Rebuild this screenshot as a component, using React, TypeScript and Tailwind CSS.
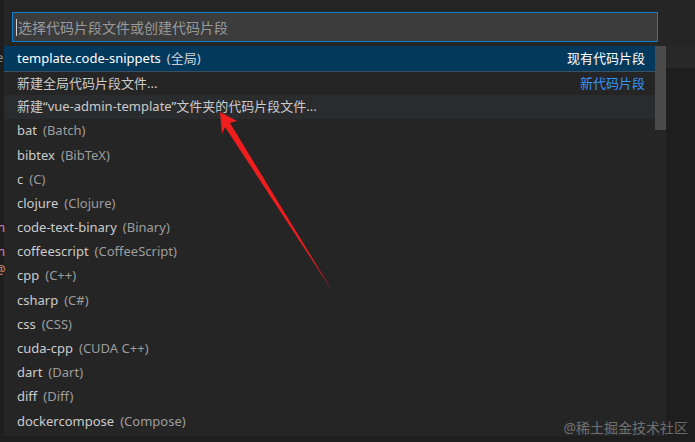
import React from 'react';

type Lang = { id: string; name: string };

const langs: Lang[] = [
  { id: 'bat', name: 'Batch' },
  { id: 'bibtex', name: 'BibTeX' },
  { id: 'c', name: 'C' },
  { id: 'clojure', name: 'Clojure' },
  { id: 'code-text-binary', name: 'Binary' },
  { id: 'coffeescript', name: 'CoffeeScript' },
  { id: 'cpp', name: 'C++' },
  { id: 'csharp', name: 'C#' },
  { id: 'css', name: 'CSS' },
  { id: 'cuda-cpp', name: 'CUDA C++' },
  { id: 'dart', name: 'Dart' },
  { id: 'diff', name: 'Diff' },
  { id: 'dockercompose', name: 'Compose' },
];

const font = { fontFamily: '"Noto Sans", "Noto Sans CJK SC", sans-serif' };

const Arrow = () => (
  <svg className="absolute left-0 top-0 pointer-events-none" width="695" height="442">
    <polygon
      points="220,112 237,121 230,123 333,292 225,127 222,134"
      fill="#f01d1d"
    />
  </svg>
);

export default function App() {
  return (
    <div
      className="relative w-[695px] h-[442px] overflow-hidden bg-[#1e1e1e] text-[13px] text-[#cccccc]"
      style={font}
    >
      <div className="flex h-full">
        {/* editor gutter peeking out */}
        <div className="relative w-[4px] shrink-0">
          <span className="absolute left-[-4px] top-[48px] text-[#8c8c8c]">e</span>
          <span className="absolute left-[-7px] top-[218px] text-[#c586c0]">m</span>
          <span className="absolute left-[-7px] top-[242px] text-[#c586c0]">m</span>
          <span className="absolute left-[-6px] top-[260px] text-[#ce9178]">@</span>
        </div>

        {/* quick pick widget */}
        <div className="w-[662px] h-[436px] shrink-0 bg-[#252526] flex flex-col">
          <div className="px-[8px] pt-[12px]">
            <div className="h-[30px] border border-[#0e7fd0] bg-[#3c3c3c] flex items-center pl-[3px]">
              <span className="w-px h-[17px] bg-[#d4d4d4]" />
              <span className="ml-px text-[14px] text-[#9a9a9a]">选择代码片段文件或创建代码片段</span>
            </div>
          </div>

          <div className="flex mt-[4px] flex-1">
            <div className="flex-1 flex flex-col">
              <div className="h-[25px] bg-[#04395e] flex items-center pl-[13px] pr-[10px] text-white">
                <span>template.code-snippets</span>
                <span className="ml-[6px] text-[#c5d2de]">(全局)</span>
                <span className="ml-auto">现有代码片段</span>
              </div>
              <div className="h-[24px] border-t border-[#3d4e5e] flex items-center pl-[13px] pr-[10px]">
                <span>新建全局代码片段文件...</span>
                <span className="ml-auto text-[#3794ff]">新代码片段</span>
              </div>
              <div className="h-[24px] bg-[#2a2b2c] flex items-center pl-[13px]">
                新建“vue-admin-template”文件夹的代码片段文件...
              </div>
              {langs.map((l) => (
                <div key={l.id} className="h-[24.2px] flex items-center pl-[13px]">
                  <span>{l.id}</span>
                  <span className="ml-[6px] text-[#9d9d9d]">({l.name})</span>
                </div>
              ))}
            </div>
            <div className="w-[11px] shrink-0">
              <div className="h-[84px] bg-[#4a4a4a]" />
            </div>
          </div>
        </div>

        <div className="flex-1 flex flex-col">
          <div className="h-[46px] bg-[#252526]" />
          <div className="h-[22px] bg-[#282828]" />
          <div className="flex-1 bg-[#1e1e1e]" />
        </div>
      </div>

      <Arrow />

      <div className="absolute right-[7px] bottom-[4px] text-[14px] text-white/35">@稀土掘金技术社区</div>
    </div>
  );
}
